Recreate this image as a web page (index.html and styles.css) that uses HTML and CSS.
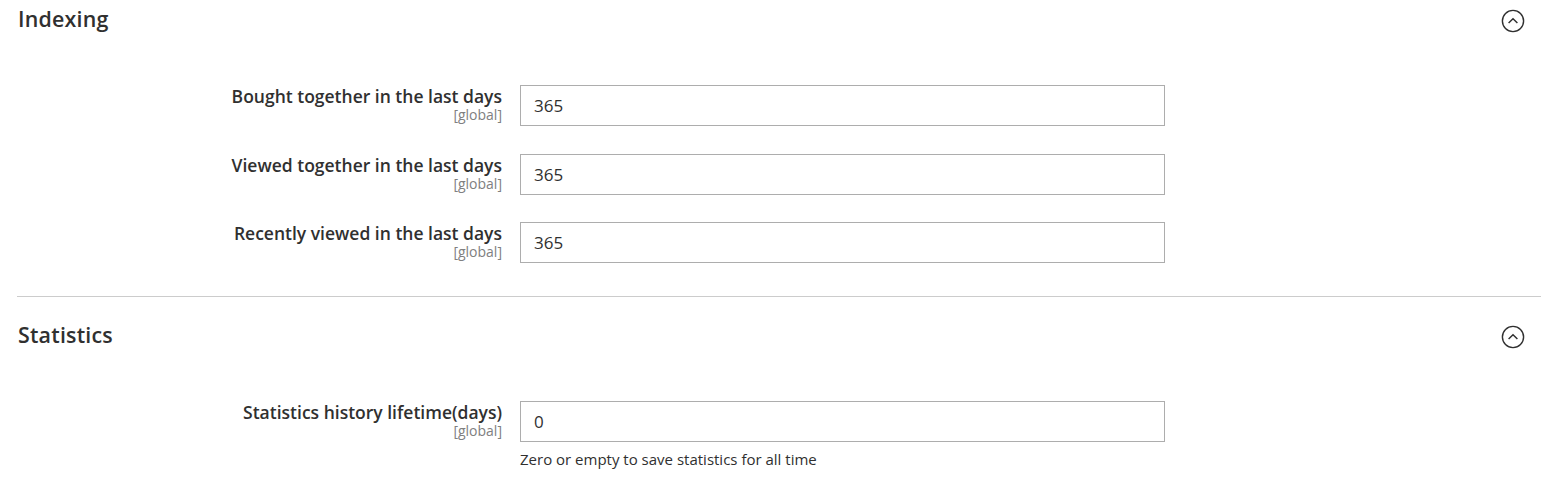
FILE: index.html
```html
<!DOCTYPE html>
<html>
<head>
<meta charset="utf-8">
<link rel="stylesheet" href="styles.css">
</head>
<body>
<div class="page">
  <section class="section first">
    <div class="section-head">
      <h2 class="section-title">Indexing</h2>
      <span class="toggle">
        <svg width="24" height="24" viewBox="0 0 24 24"><circle cx="12" cy="12" r="10.6" fill="none" stroke="#303030" stroke-width="1.4"/><path d="M7.6 14 L12 9.8 L16.4 14" fill="none" stroke="#303030" stroke-width="1.5"/></svg>
      </span>
    </div>
    <div class="fields">
      <div class="row">
        <div class="label"><span class="label-text">Bought together in the last days</span><span class="scope">[global]</span></div>
        <div class="control"><input class="input" type="text" value="365"></div>
      </div>
      <div class="row">
        <div class="label"><span class="label-text">Viewed together in the last days</span><span class="scope">[global]</span></div>
        <div class="control"><input class="input" type="text" value="365"></div>
      </div>
      <div class="row">
        <div class="label"><span class="label-text">Recently viewed in the last days</span><span class="scope">[global]</span></div>
        <div class="control"><input class="input" type="text" value="365"></div>
      </div>
    </div>
  </section>
  <section class="section second">
    <div class="section-head">
      <h2 class="section-title">Statistics</h2>
      <span class="toggle">
        <svg width="24" height="24" viewBox="0 0 24 24"><circle cx="12" cy="12" r="10.6" fill="none" stroke="#303030" stroke-width="1.4"/><path d="M7.6 14 L12 9.8 L16.4 14" fill="none" stroke="#303030" stroke-width="1.5"/></svg>
      </span>
    </div>
    <div class="fields">
      <div class="row">
        <div class="label"><span class="label-text">Statistics history lifetime(days)</span><span class="scope">[global]</span></div>
        <div class="control"><input class="input" type="text" value="0"><p class="note">Zero or empty to save statistics for all time</p></div>
      </div>
    </div>
  </section>
</div>
</body>
</html>
```
FILE: styles.css
```css
html, body {
  margin: 0;
  padding: 0;
  background: #fff;
}
body {
  font-family: "Open Sans", "Liberation Sans", sans-serif;
  color: #303030;
}
.page {
  padding: 0 9px 0 17px;
}
.section.first {
  padding-bottom: 33px;
  border-bottom: 1px solid #cccccc;
}
.section.second {
  padding-top: 19px;
}
.section-head {
  height: 38px;
  display: flex;
  align-items: center;
  justify-content: space-between;
  padding-left: 1px;
  padding-right: 16px;
}
.section-title {
  margin: 0;
  font-size: 21.4px;
  line-height: 30px;
  font-weight: 600;
  color: #303030;
  letter-spacing: 0.2px;
}
.toggle {
  display: flex;
  width: 24px;
  height: 24px;
  margin-top: 4px;
}
.fields {
  padding-top: 47px;
  display: flex;
  flex-direction: column;
  gap: 27.5px;
}
.row {
  display: flex;
  gap: 18px;
}
.label {
  width: 485px;
  flex: none;
  display: flex;
  flex-direction: column;
  align-items: flex-end;
  text-align: right;
  padding-top: 0;
}
.label-text {
  font-size: 17.5px;
  font-weight: 600;
  line-height: 22px;
}
.scope {
  font-size: 14px;
  line-height: 16px;
  color: #808080;
}
.control {
  width: 645px;
}
.input {
  box-sizing: border-box;
  width: 645px;
  height: 41px;
  border: 1px solid #adadad;
  border-radius: 0;
  padding: 0 13px;
  font-family: "Open Sans", "Liberation Sans", sans-serif;
  font-size: 17px;
  color: #303030;
  outline: none;
  display: block;
}
.note {
  margin: 8px 0 0;
  font-size: 15px;
  line-height: 19px;
  color: #303030;
}
```
